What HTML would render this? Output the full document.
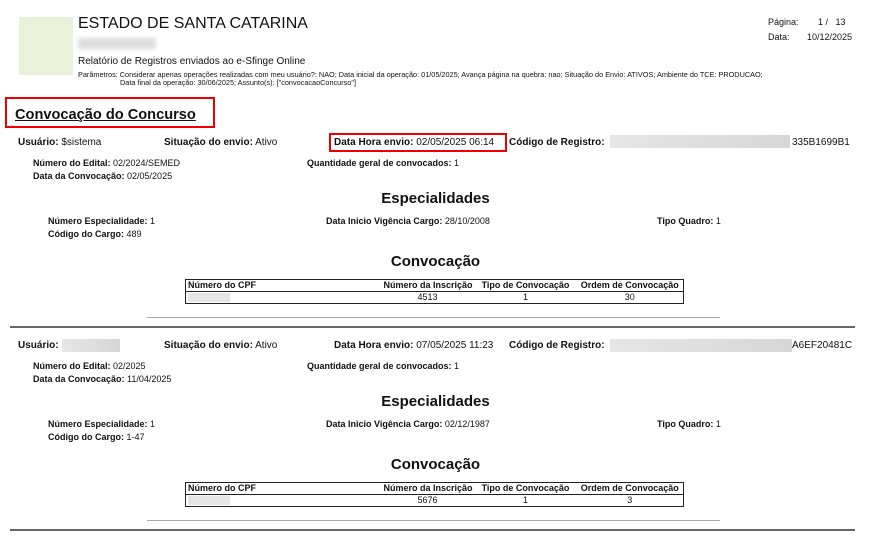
<!DOCTYPE html><html><head><meta charset="utf-8"><style>
body{margin:0;width:871px;height:543px;background:#fff;position:relative;overflow:hidden;font-family:"Liberation Sans",Arial,sans-serif;color:#111}
.a{position:absolute;white-space:nowrap;font-size:10px;line-height:12px}
b{font-weight:bold}
.h{font-size:15px;font-weight:bold;line-height:18px}
table{position:absolute;border-collapse:collapse;border:1px solid #222;font-size:9px;left:185px;width:498px;table-layout:fixed}
td{padding:0 2px;height:11px;line-height:11px;white-space:nowrap;overflow:hidden}
.gl{position:absolute;left:147px;width:573px;height:1px;background:#aaa}
.dl{position:absolute;left:10px;width:845px;height:2px;background:#666}
.bl{position:absolute;height:13px;background:linear-gradient(90deg,#e6e6e6,#d6d6d6)}
</style></head><body>
<div style="position:absolute;left:19px;top:17px;width:54px;height:58px;background:#e9f1d9"></div>
<div class="a" style="left:78px;top:15px;font-size:16px;line-height:18px">ESTADO DE SANTA CATARINA</div>
<div style="position:absolute;left:78px;top:38px;width:78px;height:11px;background:#ddd;filter:blur(2px)"></div>
<div class="a" style="left:78px;top:56px;font-size:10px">Relatório de Registros enviados ao e-Sfinge Online</div>
<div class="a" style="left:78px;top:71px;font-size:7.3px;line-height:8px">Parâmetros: Considerar apenas operações realizadas com meu usuário?: NAO; Data inicial da operação: 01/05/2025; Avança página na quebra: nao; Situação do Envio: ATIVOS; Ambiente do TCE: PRODUCAO;</div>
<div class="a" style="left:120px;top:79px;font-size:7.3px;line-height:8px">Data final da operação: 30/06/2025; Assunto(s): ["convocacaoConcurso"]</div>
<div class="a" style="left:768px;top:16px;font-size:9px">Página:</div>
<div class="a" style="left:818px;top:16px;font-size:9px">1 /&nbsp;&nbsp;&nbsp;13</div>
<div class="a" style="left:768px;top:31px;font-size:9px">Data:</div>
<div class="a" style="left:807px;top:31px;font-size:9px">10/12/2025</div>
<div style="position:absolute;left:5px;top:97px;width:206px;height:27px;border:2px solid #e00"></div>
<div class="a" style="left:15px;top:106px;font-size:14.6px;line-height:18px;font-weight:bold;text-decoration:underline">Convocação do Concurso</div>

<div class="a" style="left:18px;top:137px"><b>Usuário:</b> $sistema</div>
<div class="a" style="left:164px;top:137px"><b>Situação do envio:</b> Ativo</div>
<div style="position:absolute;left:329px;top:133px;width:174px;height:15px;border:2px solid #e00"></div>
<div class="a" style="left:334px;top:137px"><b>Data Hora envio:</b> 02/05/2025 06:14</div>
<div class="a" style="left:509px;top:137px"><b>Código de Registro:</b></div>
<div class="bl" style="left:610px;top:135px;width:180px"></div>
<div class="a" style="left:792px;top:137px">335B1699B1</div>
<div class="a" style="left:33px;top:157px;font-size:9px"><b>Número do Edital:</b> 02/2024/SEMED</div>
<div class="a" style="left:307px;top:157px;font-size:9px"><b>Quantidade geral de convocados:</b> 1</div>
<div class="a" style="left:33px;top:170px;font-size:9px"><b>Data da Convocação:</b> 02/05/2025</div>
<div class="a h" style="left:0;width:871px;text-align:center;top:190px">Especialidades</div>
<div class="a" style="left:48px;top:215px;font-size:9px"><b>Número Especialidade:</b> 1</div>
<div class="a" style="left:326px;top:215px;font-size:9px"><b>Data Inicio Vigência Cargo:</b> 28/10/2008</div>
<div class="a" style="left:657px;top:215px;font-size:9px"><b>Tipo Quadro:</b> 1</div>
<div class="a" style="left:48px;top:228px;font-size:9px"><b>Código do Cargo:</b> 489</div>
<div class="a h" style="left:0;width:871px;text-align:center;top:253px">Convocação</div>
<table style="top:279px"><colgroup><col style="width:185px"><col style="width:104px"><col style="width:102px"><col style="width:107px"></colgroup><tr style="font-weight:bold;border-bottom:1px solid #222"><td>Número do CPF</td><td style="text-align:right">Número da Inscrição</td><td style="text-align:center">Tipo de Convocação</td><td style="text-align:center">Ordem de Convocação</td></tr>
<tr><td><div style="width:42px;height:9px;background:#e5e5e5"></div></td><td style="text-align:right;padding-right:37px">4513</td><td style="text-align:center">1</td><td style="text-align:center">30</td></tr></table>
<div class="gl" style="top:317px"></div>
<div class="dl" style="top:326px"></div>

<div class="a" style="left:18px;top:340px"><b>Usuário:</b></div>
<div class="bl" style="left:62px;top:339px;width:58px"></div>
<div class="a" style="left:164px;top:340px"><b>Situação do envio:</b> Ativo</div>
<div class="a" style="left:334px;top:340px"><b>Data Hora envio:</b> 07/05/2025 11:23</div>
<div class="a" style="left:509px;top:340px"><b>Código de Registro:</b></div>
<div class="bl" style="left:610px;top:339px;width:182px"></div>
<div class="a" style="left:792px;top:340px">A6EF20481C</div>
<div class="a" style="left:33px;top:360px;font-size:9px"><b>Número do Edital:</b> 02/2025</div>
<div class="a" style="left:307px;top:360px;font-size:9px"><b>Quantidade geral de convocados:</b> 1</div>
<div class="a" style="left:33px;top:373px;font-size:9px"><b>Data da Convocação:</b> 11/04/2025</div>
<div class="a h" style="left:0;width:871px;text-align:center;top:393px">Especialidades</div>
<div class="a" style="left:48px;top:418px;font-size:9px"><b>Número Especialidade:</b> 1</div>
<div class="a" style="left:326px;top:418px;font-size:9px"><b>Data Inicio Vigência Cargo:</b> 02/12/1987</div>
<div class="a" style="left:657px;top:418px;font-size:9px"><b>Tipo Quadro:</b> 1</div>
<div class="a" style="left:48px;top:431px;font-size:9px"><b>Código do Cargo:</b> 1-47</div>
<div class="a h" style="left:0;width:871px;text-align:center;top:456px">Convocação</div>
<table style="top:482px"><colgroup><col style="width:185px"><col style="width:104px"><col style="width:102px"><col style="width:107px"></colgroup><tr style="font-weight:bold;border-bottom:1px solid #222"><td>Número do CPF</td><td style="text-align:right">Número da Inscrição</td><td style="text-align:center">Tipo de Convocação</td><td style="text-align:center">Ordem de Convocação</td></tr>
<tr><td><div style="width:42px;height:9px;background:#e5e5e5"></div></td><td style="text-align:right;padding-right:37px">5676</td><td style="text-align:center">1</td><td style="text-align:center">3</td></tr></table>
<div class="gl" style="top:520px"></div>
<div class="dl" style="top:529px"></div>
</body></html>
